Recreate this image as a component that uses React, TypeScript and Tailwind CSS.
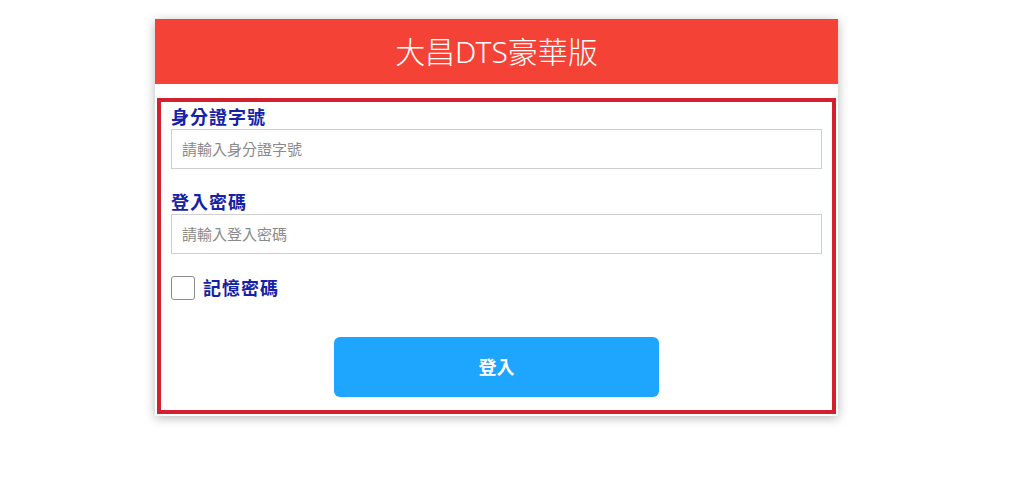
import React from 'react';

const font = { fontFamily: '"Noto Sans", "Noto Sans CJK TC", sans-serif' };

export default function App() {
  return (
    <div className="min-h-screen bg-white pt-[19px]" style={font}>
      <div className="ml-[155px] w-[683px] bg-white pb-[2px] shadow-[0_2px_10px_rgba(0,0,0,0.28)]">
        <div className="flex h-[65px] items-center justify-center bg-[#f44336]">
          <h1 className="text-[30px] font-light leading-none text-white">大昌DTS豪華版</h1>
        </div>

        <form className="mx-[2px] mt-[14px] border-4 border-[#d2202f] px-[10px] pb-[13px] pt-[3px]">
          <label className="block h-[24px] text-[18px] font-semibold leading-[24px] tracking-[1px] text-[#1622a6]">身分證字號</label>
          <input
            className="block h-[40px] w-full border border-[#cfcfcf] px-[10px] text-[15px] text-gray-700 outline-none placeholder:text-[#8a8a8a]"
            placeholder="請輸入身分證字號"
          />

          <label className="mt-[21px] block h-[24px] text-[18px] font-semibold leading-[24px] tracking-[1px] text-[#1622a6]">登入密碼</label>
          <input
            type="password"
            className="block h-[40px] w-full border border-[#cfcfcf] px-[10px] text-[15px] text-gray-700 outline-none placeholder:text-[#8a8a8a]"
            placeholder="請輸入登入密碼"
          />

          <label className="mt-[22px] flex items-center gap-[8px]">
            <span className="block h-[24px] w-[24px] rounded-[3px] border border-[#8c8c8c] bg-white" />
            <span className="text-[18px] font-semibold leading-[24px] tracking-[1px] text-[#1622a6]">記憶密碼</span>
          </label>

          <div className="mt-[37px] flex justify-center">
            <button
              type="button"
              className="h-[60px] w-1/2 rounded-[6px] bg-[#1ea5fd] text-[18px] font-bold text-white"
            >
              登入
            </button>
          </div>
        </form>
      </div>
    </div>
  );
}
